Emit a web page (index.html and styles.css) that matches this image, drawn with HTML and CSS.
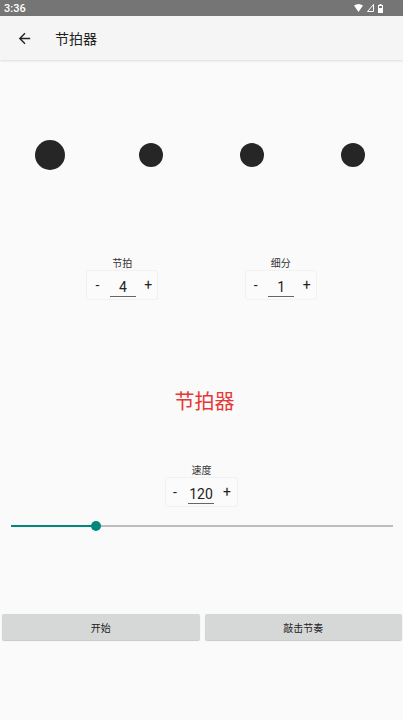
FILE: index.html
```html
<!DOCTYPE html>
<html lang="zh">
<head>
<meta charset="utf-8">
<link rel="stylesheet" href="styles.css">
</head>
<body>
<div class="status">
  <span class="time">3:36</span>
  <span class="sicons">
    <svg width="9" height="8" viewBox="0 0 9 8"><path d="M0 1.5 Q4.5 -1.5 9 1.5 L4.5 8 Z" fill="#fff"/></svg>
    <svg width="7" height="8" viewBox="0 0 7 8"><path d="M6.5 0.5 L6.5 7.5 L0.5 7.5 Z" fill="none" stroke="#fff" stroke-width="1"/></svg>
    <svg width="5" height="9" viewBox="0 0 5 9"><rect x="1.5" y="0" width="2" height="1" fill="#fff"/><rect x="0.5" y="1.5" width="4" height="7" fill="none" stroke="#fff" stroke-width="1"/><rect x="1" y="4" width="3" height="4.5" fill="#fff"/></svg>
  </span>
</div>
<div class="appbar">
  <svg class="back" width="17" height="17" viewBox="0 0 24 24"><path d="M20 11H7.83l5.59-5.59L12 4l-8 8 8 8 1.41-1.41L7.83 13H20v-2z" fill="#222"/></svg>
  <span class="apptitle">节拍器</span>
</div>
<div class="main">
  <div class="dots">
    <div class="cell"><span class="dot big"></span></div>
    <div class="cell"><span class="dot"></span></div>
    <div class="cell"><span class="dot"></span></div>
    <div class="cell"><span class="dot"></span></div>
  </div>
  <div class="steppers">
    <div class="group">
      <div class="label">节拍</div>
      <div class="box"><span class="op">-</span><span class="val">4</span><span class="op">+</span></div>
    </div>
    <div class="group">
      <div class="label">细分</div>
      <div class="box"><span class="op">-</span><span class="val">1</span><span class="op">+</span></div>
    </div>
  </div>
  <div class="bigtitle">节拍器</div>
  <div class="group speed">
    <div class="label">速度</div>
    <div class="box"><span class="op">-</span><span class="val">120</span><span class="op">+</span></div>
  </div>
  <div class="slider">
    <div class="track"><div class="active" style="width:85px"></div><span class="thumb"></span></div>
  </div>
  <div class="buttons">
    <div class="btn">开始</div>
    <div class="btn">敲击节奏</div>
  </div>
</div>
</body>
</html>
```
FILE: styles.css
```css
* { box-sizing: border-box; }
html, body { margin: 0; padding: 0; }
body {
  width: 403px;
  height: 720px;
  background: #fafafa;
  font-family: Roboto, "Noto Sans CJK SC", sans-serif;
  color: #222;
  overflow: hidden;
}
.status {
  height: 16px;
  background: #757575;
  display: flex;
  align-items: center;
  justify-content: space-between;
  padding: 0 20px 0 4px;
}
.time { color: #fff; font-size: 11px; font-weight: 500; font-family: Roboto, sans-serif; }
.sicons { display: flex; align-items: center; gap: 4px; }
.sicons svg { display: block; }
.appbar {
  height: 44px;
  background: #f5f5f5;
  display: flex;
  align-items: center;
  padding-left: 16px;
  box-shadow: 0 1px 2px rgba(0,0,0,0.12);
  position: relative;
}
.back { display: block; }
.apptitle {
  margin-left: 22px;
  font-family: "Noto Sans CJK SC", sans-serif;
  font-size: 14px;
  color: #222;
}
.main { display: flex; flex-direction: column; }
.dots { display: flex; margin-top: 80px; height: 30px; }
.cell { flex: 1; display: flex; align-items: center; justify-content: center; }
.dot { width: 24px; height: 24px; border-radius: 50%; background: #262626; display: block; }
.dot.big { width: 30px; height: 30px; }
.steppers { display: flex; justify-content: space-evenly; margin-top: 86px; }
.group { display: flex; flex-direction: column; align-items: center; }
.label {
  font-family: "Noto Sans CJK SC", sans-serif;
  font-size: 10px;
  line-height: 14px;
  height: 14px;
  color: #333;
}
.box {
  width: 72px;
  height: 30px;
  display: flex;
  align-items: center;
  justify-content: space-between;
  padding: 0 4px 0 5px;
  border: 1px solid #f1f1f1;
  border-radius: 3px;
  background: #fbfbfb;
}
.op { font-size: 14px; width: 10px; text-align: center; color: #222; }
.val {
  width: 26px;
  text-align: center;
  font-size: 14px;
  line-height: 18px;
  border-bottom: 1px solid #666;
  margin-top: 4px;
}
.bigtitle {
  margin-top: 87px;
  text-align: center;
  font-family: "Noto Sans CJK SC", sans-serif;
  font-size: 20px;
  line-height: 28px;
  color: #e53935;
  padding-left: 6px;
}
.speed { margin-top: 48px; }
.speed .box { width: 73px; padding: 0 5px 0 4px; }
.slider { margin-top: 9px; height: 20px; padding: 0 10px 0 11px; display: flex; align-items: center; }
.track { position: relative; flex: 1; height: 2px; background: #bdbdbd; }
.active { height: 2px; background: #00897b; }
.thumb {
  position: absolute;
  left: 80px;
  top: -4px;
  width: 10px;
  height: 10px;
  border-radius: 50%;
  background: #00897b;
}
.buttons { display: flex; gap: 5px; margin-top: 78px; padding: 0 1px 0 2px; }
.btn {
  flex: 1;
  height: 26px;
  background: #d6d7d7;
  border-radius: 2px;
  box-shadow: 0 1px 1px rgba(0,0,0,0.2);
  display: flex;
  align-items: center;
  justify-content: center;
  font-family: "Noto Sans CJK SC", sans-serif;
  font-size: 10px;
  color: #222;
}
```
